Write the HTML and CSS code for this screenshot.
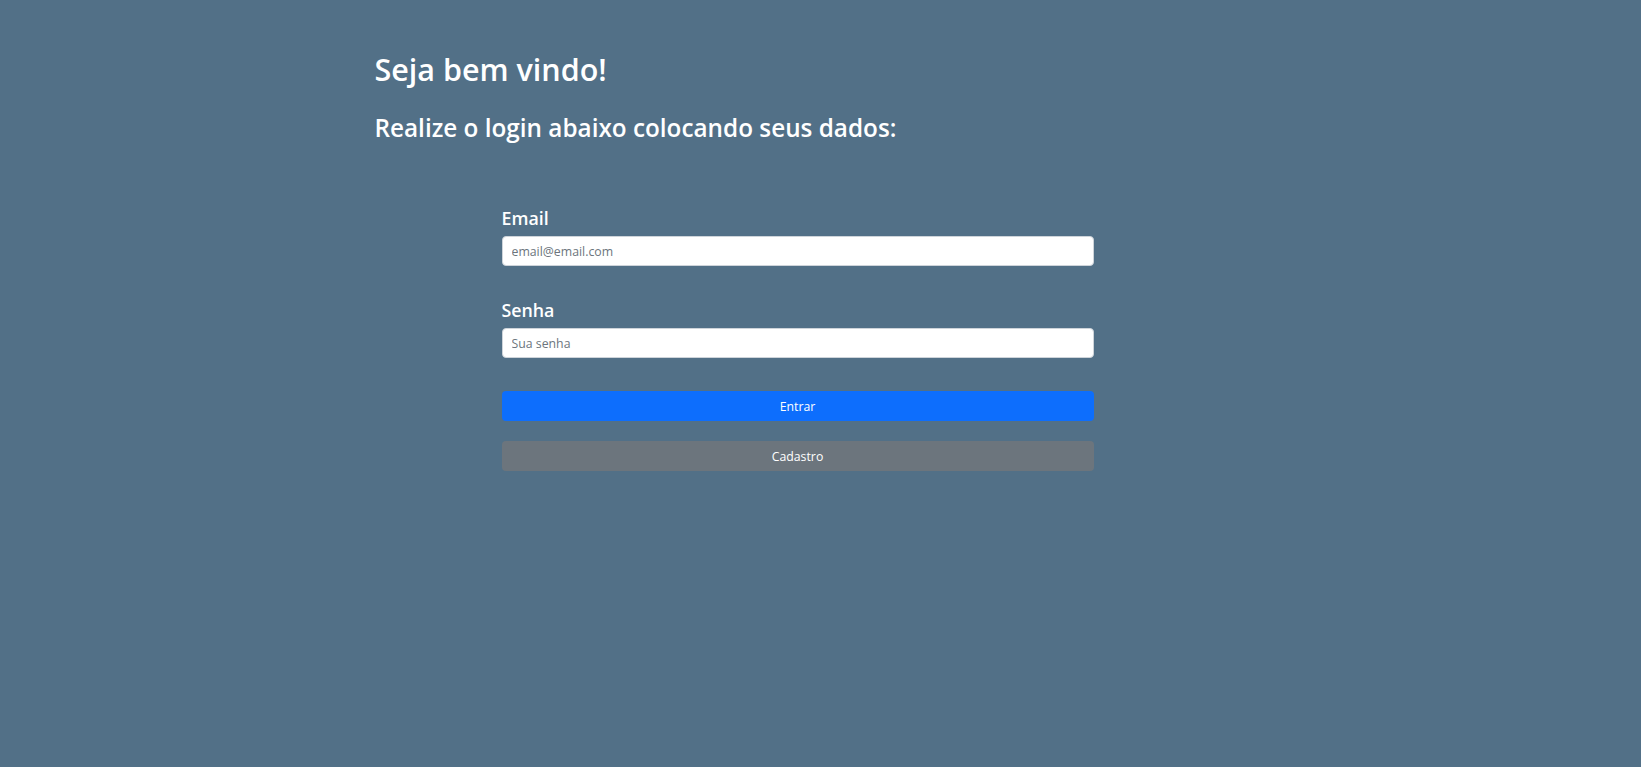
FILE: index.html
```html
<!DOCTYPE html>
<html lang="pt-BR">
<head>
<meta charset="utf-8">
<title>Login</title>
<link rel="stylesheet" href="styles.css">
</head>
<body>
<main class="container">
  <h1 class="title">Seja bem vindo!</h1>
  <h2 class="subtitle">Realize o login abaixo colocando seus dados:</h2>
  <form class="login-form">
    <div class="field">
      <label class="field-label" for="email">Email</label>
      <input class="field-input" id="email" type="email" placeholder="email@email.com">
    </div>
    <div class="field">
      <label class="field-label" for="senha">Senha</label>
      <input class="field-input" id="senha" type="password" placeholder="Sua senha">
    </div>
    <div class="actions">
      <button class="btn btn-primary" type="submit">Entrar</button>
      <button class="btn btn-secondary" type="button">Cadastro</button>
    </div>
  </form>
</main>
</body>
</html>
```
FILE: styles.css
```css
html, body {
  margin: 0;
  padding: 0;
}
body {
  background: #527087;
  color: #ffffff;
  font-family: "Open Sans", "Noto Sans", sans-serif;
  min-height: 767px;
}
.container {
  width: 916px;
  margin: 0 auto;
  padding: 51px 12px 0;
  box-sizing: border-box;
}
.title {
  margin: 0;
  font-size: 30.5px;
  line-height: 36px;
  font-weight: 600;
}
.subtitle {
  margin: 26px 0 0;
  font-size: 24.3px;
  line-height: 29px;
  font-weight: 600;
}
.login-form {
  margin: 65px 0 0 127px;
  width: 592px;
  display: flex;
  flex-direction: column;
}
.field {
  display: flex;
  flex-direction: column;
}
.field + .field {
  margin-top: 33px;
}
.field-label {
  font-size: 17.8px;
  line-height: 22px;
  font-weight: 600;
  margin-bottom: 7px;
}
.field-input {
  height: 30px;
  box-sizing: border-box;
  border: 1px solid #ced4da;
  border-radius: 4px;
  background: #fff;
  padding: 0 9px;
  font-family: inherit;
  font-size: 12.3px;
  color: #212529;
}
.field-input::placeholder {
  color: #6c757d;
}
.actions {
  margin-top: 33px;
  display: flex;
  flex-direction: column;
  gap: 20px;
}
.btn {
  height: 30px;
  border: 0;
  border-radius: 4px;
  color: #fff;
  font-family: inherit;
  font-size: 12.3px;
  padding: 0;
}
.btn-primary {
  background: #0d6efd;
}
.btn-secondary {
  background: #6c757d;
}
```
